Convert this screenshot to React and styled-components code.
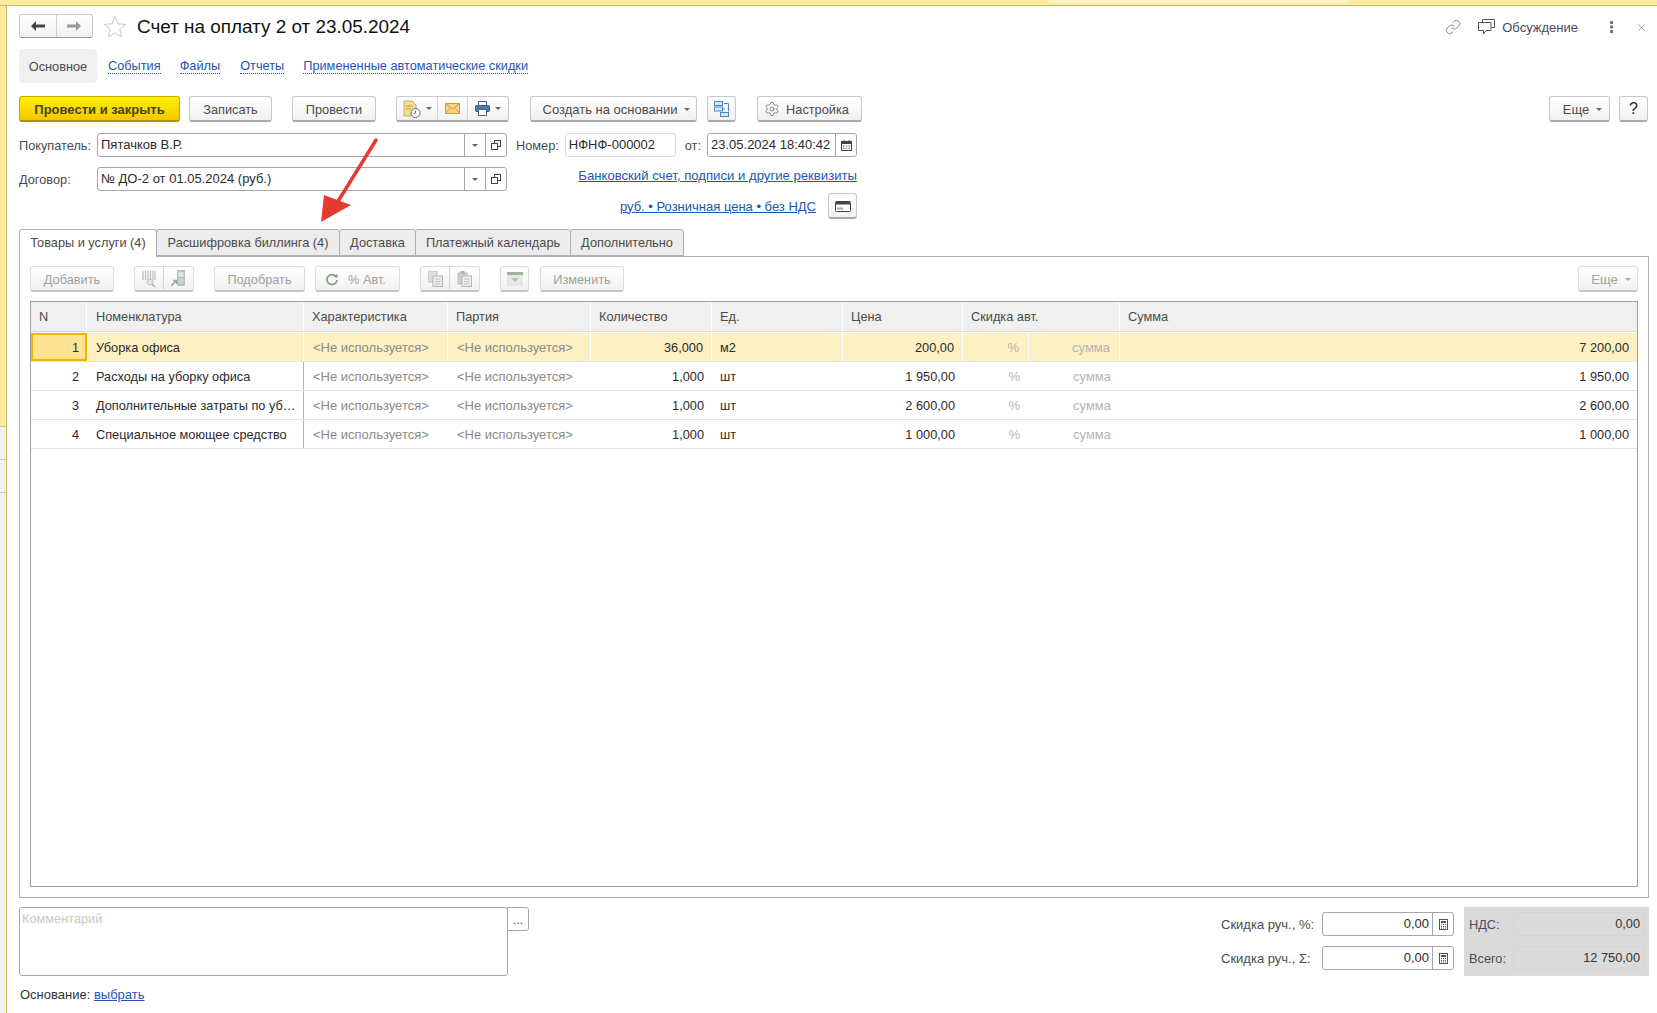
import React from "react";
import styled, { createGlobalStyle } from "styled-components";
import { Settings, Link as ChainLink, X } from "lucide-react";

const columns = "56px 217px 144px 143px 121px 131px 120px 66px 91px 1fr";

const rows = [
  { n: 1, name: "Уборка офиса", qty: "36,000", unit: "м2", price: "200,00", sum: "7 200,00" },
  { n: 2, name: "Расходы на уборку офиса", qty: "1,000", unit: "шт", price: "1 950,00", sum: "1 950,00" },
  { n: 3, name: "Дополнительные затраты по уб…", qty: "1,000", unit: "шт", price: "2 600,00", sum: "2 600,00" },
  { n: 4, name: "Специальное моющее средство", qty: "1,000", unit: "шт", price: "1 000,00", sum: "1 000,00" },
];

function Caret({ color = "#666" }) {
  return (
    <svg width="6" height="3" viewBox="0 0 6 3">
      <path d="M0 0h6L3 3z" fill={color} />
    </svg>
  );
}

function Star() {
  return (
    <svg width="24" height="23" viewBox="0 0 24 23" fill="none">
      <path d="M12 1.5l3 7.3 7.8.6-6 5 1.9 7.6L12 17.9 5.300 22l1.900-7.600-6-5 7.800-.6z" stroke="#c9c9c9" />
    </svg>
  );
}

function NavArrow({ left, color }) {
  return (
    <svg width="14" height="10" viewBox="0 0 14 10" style={{ transform: left ? "none" : "scaleX(-1)" }}>
      <path d="M0 5l5-5v3.500h9v3H5V10z" fill={color} />
    </svg>
  );
}

function Bubbles() {
  return (
    <svg width="17" height="16" viewBox="0 0 17 16" fill="none" stroke="#555">
      <path d="M4.500 3V.5h12v8h-3" />
      <path d="M.5 3.500h12.500v8H8L5.500 15v-3.500h-5z" fill="#fff" />
    </svg>
  );
}

function Dots() {
  return (
    <svg width="4" height="12" viewBox="0 0 4 12" fill="#777">
      <rect x="1" y="0" width="3" height="3" />
      <rect x="1" y="4.500" width="3" height="3" />
      <rect x="1" y="9" width="3" height="3" />
    </svg>
  );
}

function DocClock() {
  return (
    <svg width="18" height="18" viewBox="0 0 18 18">
      <path d="M1 1h8l4 4v11H1z" fill="#f6dc96" stroke="#d0a850" />
      <path d="M3 6h7M3 9h5" stroke="#c89a3c" />
      <circle cx="12.500" cy="13" r="4.500" fill="#fff" stroke="#3f6fb5" />
      <path d="M12.500 10.500V13l-2 1" stroke="#d8352a" fill="none" />
    </svg>
  );
}

function Envelope() {
  return (
    <svg width="15" height="11" viewBox="0 0 15 11">
      <rect x=".5" y=".5" width="14" height="10" fill="#f6d48a" stroke="#d8973a" />
      <path d="M.5.5l7 5.500 7-5.500M.5 10.500l5-6M14.500 10.500l-5-6" fill="none" stroke="#d8973a" />
    </svg>
  );
}

function Printer() {
  return (
    <svg width="15" height="15" viewBox="0 0 15 15">
      <rect x="3.500" y=".5" width="8" height="4" fill="#fff" stroke="#44648c" />
      <rect x=".5" y="4.500" width="14" height="6" rx="1" fill="#4f77a8" stroke="#3c5c84" />
      <rect x="3.500" y="8.500" width="8" height="6" fill="#fff" stroke="#44648c" />
    </svg>
  );
}

function Structure() {
  return (
    <svg width="15" height="16" viewBox="0 0 15 16" fill="#d7e6f5" stroke="#4f86bd">
      <rect x=".5" y=".5" width="8" height="4" />
      <rect x=".5" y="6" width="8" height="4" />
      <rect x="6.500" y="11.500" width="8" height="4" />
      <path d="M10 2.500h4.500v8M8.500 8H11" fill="none" />
    </svg>
  );
}

function Calendar() {
  return (
    <svg width="11" height="11" viewBox="0 0 11 11">
      <rect x=".5" y="1.500" width="10" height="9" fill="#fff" stroke="#444" />
      <rect x="1" y="2" width="9" height="2" fill="#444" />
      <path d="M3 0v2M8 0v2" stroke="#444" />
      <path d="M2 6h1.500M4.800 6h1.500M7.500 6H9M2 8.300h1.500M4.800 8.300h1.500M7.500 8.300H9" stroke="#666" />
    </svg>
  );
}

function Calculator() {
  return (
    <svg width="9" height="11" viewBox="0 0 9 11">
      <rect x=".5" y=".5" width="8" height="10" fill="#fff" stroke="#555" />
      <rect x="2" y="2" width="5" height="2" fill="#555" />
      <path d="M2 5.500h1M4 5.500h1M6 5.500h1M2 7.500h1M4 7.500h1M6 7.500h1M2 9h1M4 9h1M6 9h1" stroke="#555" />
    </svg>
  );
}

function PriceCard() {
  return (
    <svg width="16" height="11" viewBox="0 0 16 11">
      <rect x=".5" y=".5" width="15" height="10" rx="1" fill="#fff" stroke="#444" />
      <rect x="1" y="1" width="14" height="2.500" fill="#444" />
      <path d="M3 8.500V6.500M5 8.500V6.500M7 8.500V6.500" stroke="#555" />
    </svg>
  );
}

function ScanHand() {
  return (
    <svg width="14" height="16" viewBox="0 0 14 16" opacity=".55">
      <path d="M1 0v9M3.500 0v9M6 0v9M8.500 0v9M11 0v9M13 0v9" stroke="#777" />
      <circle cx="8" cy="11" r="3" fill="#d5d5e5" stroke="#999" />
      <path d="M10 13l3 3" stroke="#777" strokeWidth="1.500" />
    </svg>
  );
}

function Terminal() {
  return (
    <svg width="15" height="17" viewBox="0 0 15 17" opacity=".6">
      <rect x="6" y="0" width="8" height="16" rx="1" fill="#8a9a9a" />
      <rect x="7.500" y="2" width="5" height="5" fill="#c8e0d0" />
      <path d="M7.500 9h5M7.500 11h5M7.500 13h5" stroke="#ddd" />
      <path d="M0 16l5-5M2 10.500h3.500V14" stroke="#4d7d58" strokeWidth="1.500" fill="none" />
    </svg>
  );
}

function Refresh() {
  return (
    <svg width="12" height="13" viewBox="0 0 12 13" fill="none">
      <path d="M10 3.500A5 5 0 1 0 11 7" stroke="#8aa08a" strokeWidth="1.800" />
      <path d="M7.500 3.800L11.500 5V.8z" fill="#8aa08a" />
    </svg>
  );
}

function Sheets({ clip }) {
  return (
    <svg width="15" height="16" viewBox="0 0 15 16" opacity=".6">
      <rect x={clip ? 1 : 0} y={clip ? 2 : 0} width="9" height="11" fill={clip ? "#b8ad98" : "#ccc"} stroke="#999" />
      {clip && <rect x="3.500" y="0" width="4" height="3" fill="#888" />}
      <rect x="5" y="5" width="9.500" height="10.500" fill="#e8ecec" stroke="#888" />
      <path d="M7 8h5.500M7 10.500h5.500M7 13h5.500" stroke="#999" />
    </svg>
  );
}

function FilterSheet() {
  return (
    <svg width="16" height="14" viewBox="0 0 16 14" opacity=".6">
      <rect x="0" y="0" width="16" height="14" fill="#d8e0d8" />
      <rect x="0" y="0" width="16" height="3" fill="#5d8a5d" />
      <path d="M4 6h8L8 10z" fill="#7ea77e" />
    </svg>
  );
}

function Arrow() {
  return (
    <ArrowMark width="60" height="90" viewBox="0 0 60 90">
      <path d="M55 3L16 66" stroke="#e53a2f" strokeWidth="3.500" strokeLinecap="round" />
      <path d="M0 85l3-27 27 10z" fill="#e53a2f" />
    </ArrowMark>
  );
}

function OpenIcon() {
  return (
    <svg width="10" height="10" viewBox="0 0 10 10" fill="#fff" stroke="#444">
      <rect x="3.500" y=".5" width="6" height="6" />
      <rect x=".5" y="3.500" width="6" height="6" />
    </svg>
  );
}

function LookupField({ value }) {
  return (
    <Field $width={410}>
      <FieldValue>{value}</FieldValue>
      <FieldAddon $width={21}>
        <Caret />
      </FieldAddon>
      <FieldAddon $width={21}>
        <OpenIcon />
      </FieldAddon>
    </Field>
  );
}

function App() {
  return (
    <>
      <GlobalStyle />
      <Page>
        <TopStrip>
          <TopTab />
        </TopStrip>
        <Body>
          <SideStrip>
            <SideActive />
            <SideItem />
            <SideItem />
            <SideRest />
          </SideStrip>
          <Content>
            <TitleRow>
              <NavGroup>
                <NavButton $first>
                  <NavArrow left color="#444" />
                </NavButton>
                <NavButton>
                  <NavArrow color="#999" />
                </NavButton>
              </NavGroup>
              <StarWrap>
                <Star />
              </StarWrap>
              <Title>Счет на оплату 2 от 23.05.2024</Title>
              <TitleTools>
                <LinkIcon size={16} strokeWidth={1} color="#555" />
                <Bubbles />
                <ToolText>Обсуждение</ToolText>
                <DotsWrap>
                  <Dots />
                </DotsWrap>
                <X size={11} strokeWidth={1.4} color="#666" />
              </TitleTools>
            </TitleRow>

            <SectionRow>
              <SectionActive>Основное</SectionActive>
              <SectionLink $ml={11}>События</SectionLink>
              <SectionLink $ml={19}>Файлы</SectionLink>
              <SectionLink $ml={20}>Отчеты</SectionLink>
              <SectionLink $ml={19}>Примененные автоматические скидки</SectionLink>
            </SectionRow>

            <CommandBar>
              <PrimaryButton>Провести и закрыть</PrimaryButton>
              <Button $width={83} $ml={9}>Записать</Button>
              <Button $width={84} $ml={20}>Провести</Button>
              <ButtonGroup $ml={20}>
                <GroupPart $width={41}>
                  <DocClock />
                  <Caret />
                </GroupPart>
                <GroupPart $width={30}>
                  <Envelope />
                </GroupPart>
                <GroupPart $width={40}>
                  <Printer />
                  <Caret />
                </GroupPart>
              </ButtonGroup>
              <MenuButton $width={167} $ml={21}>
                Создать на основании
                <Caret />
              </MenuButton>
              <Button $width={29} $ml={10}>
                <Structure />
              </Button>
              <GearButton $width={105} $ml={21}>
                <Settings size={16} strokeWidth={1} color="#555" />
                Настройка
              </GearButton>
              <MenuButton $width={61} $ml="auto">
                Еще
                <Caret />
              </MenuButton>
              <Button $width={29} $ml={9}>
                <HelpMark>?</HelpMark>
              </Button>
            </CommandBar>

            <FormBlock>
              <FormLeft>
                <FormRow>
                  <FieldLabel>Покупатель:</FieldLabel>
                  <LookupField value="Пятачков В.Р." />
                </FormRow>
                <FormRow>
                  <FieldLabel>Договор:</FieldLabel>
                  <LookupField value="№ ДО-2 от 01.05.2024 (руб.)" />
                </FormRow>
              </FormLeft>
              <FormRight>
                <FormRow>
                  <InlineLabel>Номер:</InlineLabel>
                  <Field $width={111} $light>
                    <FieldValue>НФНФ-000002</FieldValue>
                  </Field>
                  <InlineLabel $ml={9}>от:</InlineLabel>
                  <Field $width={150}>
                    <FieldValue>23.05.2024 18:40:42</FieldValue>
                    <FieldAddon $width={21}>
                      <Calendar />
                    </FieldAddon>
                  </Field>
                </FormRow>
                <RequisitesLink>Банковский счет, подписи и другие реквизиты</RequisitesLink>
                <PriceRow>
                  <PlainLink>руб. • Розничная цена • без НДС</PlainLink>
                  <Button $width={29} $ml={12}>
                    <PriceCard />
                  </Button>
                </PriceRow>
              </FormRight>
            </FormBlock>

            <TabBar>
              <Tab $width={138} $active>Товары и услуги (4)</Tab>
              <Tab $width={184}>Расшифровка биллинга (4)</Tab>
              <Tab $width={77}>Доставка</Tab>
              <Tab $width={156}>Платежный календарь</Tab>
              <Tab $width={114}>Дополнительно</Tab>
            </TabBar>

            <TabPanel>
              <TableBar>
                <Button $width={84} $muted>Добавить</Button>
                <ButtonGroup $ml={20} $muted>
                  <GroupPart $width={29}>
                    <ScanHand />
                  </GroupPart>
                  <GroupPart $width={29}>
                    <Terminal />
                  </GroupPart>
                </ButtonGroup>
                <Button $width={91} $ml={20} $muted>Подобрать</Button>
                <AutoButton $width={85} $ml={10} $muted>
                  <Refresh />
                  % Авт.
                </AutoButton>
                <ButtonGroup $ml={20} $muted>
                  <GroupPart $width={29}>
                    <Sheets />
                  </GroupPart>
                  <GroupPart $width={29}>
                    <Sheets clip />
                  </GroupPart>
                </ButtonGroup>
                <Button $width={29} $ml={20} $muted>
                  <FilterSheet />
                </Button>
                <Button $width={84} $ml={11} $muted>Изменить</Button>
                <MenuButton $width={60} $ml="auto" $muted>
                  Еще
                  <Caret color="#aaa" />
                </MenuButton>
              </TableBar>

              <Table>
                <HeadRow>
                  <HeadCell>N</HeadCell>
                  <HeadCell>Номенклатура</HeadCell>
                  <HeadCell>Характеристика</HeadCell>
                  <HeadCell>Партия</HeadCell>
                  <HeadCell>Количество</HeadCell>
                  <HeadCell>Ед.</HeadCell>
                  <HeadCell>Цена</HeadCell>
                  <HeadCell $span={2}>Скидка авт.</HeadCell>
                  <HeadCell>Сумма</HeadCell>
                </HeadRow>
                {rows.map((row, i) => (
                  <Row key={row.n} $active={i === 0}>
                    <NumberCell $active={i === 0}>{row.n}</NumberCell>
                    <NameCell $active={i === 0}>{row.name}</NameCell>
                    <Cell $active={i === 0} $muted>&lt;Не используется&gt;</Cell>
                    <Cell $active={i === 0} $muted>&lt;Не используется&gt;</Cell>
                    <Cell $active={i === 0} $right>{row.qty}</Cell>
                    <UnitCell $active={i === 0}>{row.unit}</UnitCell>
                    <Cell $active={i === 0} $right>{row.price}</Cell>
                    <Cell $active={i === 0} $right $faint>%</Cell>
                    <Cell $active={i === 0} $right $faint>сумма</Cell>
                    <Cell $active={i === 0} $right $last>{row.sum}</Cell>
                  </Row>
                ))}
              </Table>
            </TabPanel>

            <Footer>
              <CommentColumn>
                <CommentRow>
                  <CommentBox>Комментарий</CommentBox>
                  <MoreButton>...</MoreButton>
                </CommentRow>
                <BaseRow>
                  Основание: <PlainLink>выбрать</PlainLink>
                </BaseRow>
              </CommentColumn>
              <DiscountColumn>
                <DiscountRow>
                  <DiscountLabel>Скидка руч., %:</DiscountLabel>
                  <Field $width={132}>
                    <NumberValue>0,00</NumberValue>
                    <FieldAddon $width={21}>
                      <Calculator />
                    </FieldAddon>
                  </Field>
                </DiscountRow>
                <DiscountRow>
                  <DiscountLabel>Скидка руч., Σ:</DiscountLabel>
                  <Field $width={132}>
                    <NumberValue>0,00</NumberValue>
                    <FieldAddon $width={21}>
                      <Calculator />
                    </FieldAddon>
                  </Field>
                </DiscountRow>
              </DiscountColumn>
              <TotalsPanel>
                <TotalRow>
                  <TotalLabel>НДС:</TotalLabel>
                  <TotalValue>0,00</TotalValue>
                </TotalRow>
                <TotalRow>
                  <TotalLabel>Всего:</TotalLabel>
                  <TotalValue>12 750,00</TotalValue>
                </TotalRow>
              </TotalsPanel>
            </Footer>
            <Arrow />
          </Content>
        </Body>
      </Page>
    </>
  );
}

const GlobalStyle = createGlobalStyle`
  html, body {
    margin: 0;
    padding: 0;
    background: #fff;
  }
  body {
    font-family: "Liberation Sans", Arial, sans-serif;
    font-size: 12.75px;
    color: #4b4b4b;
  }
  * {
    box-sizing: border-box;
  }
`;

const Page = styled.div`
  display: flex;
  flex-direction: column;
  width: 1657px;
  height: 1013px;
  overflow: hidden;
`;

const TopStrip = styled.div`
  display: flex;
  flex: none;
  height: 6px;
  padding-left: 1049px;
  background: #fdeb9b;
  border-bottom: 1px solid #c9b966;
`;

const TopTab = styled.div`
  width: 300px;
  height: 3px;
  background: #fcf3c9;
`;

const Body = styled.div`
  display: flex;
  flex: 1;
  min-height: 0;
`;

const SideStrip = styled.div`
  display: flex;
  flex: none;
  flex-direction: column;
  width: 7px;
  border-right: 1px solid #c9b966;
`;

const SideActive = styled.div`
  height: 421px;
  background: #fdeb9b;
  border-bottom: 1px solid #c9c9c9;
`;

const SideItem = styled.div`
  height: 33px;
  background: #f0f0f0;
  border-bottom: 1px solid #c9c9c9;
`;

const SideRest = styled.div`
  flex: 1;
  background: #f0f0f0;
`;

const Content = styled.main`
  position: relative;
  display: flex;
  flex: 1;
  flex-direction: column;
  min-width: 0;
  padding: 8px 8px 0 12px;
`;

const TitleRow = styled.div`
  display: flex;
  align-items: center;
  height: 24px;
`;

const NavGroup = styled.div`
  display: flex;
  width: 74px;
  height: 24px;
  border: 1px solid #c8c8c8;
  border-bottom-color: #9a9a9a;
  border-radius: 3px;
  background: linear-gradient(#fff, #f1f1f1);
`;

const NavButton = styled.div`
  display: flex;
  align-items: center;
  justify-content: center;
  flex: 1;
  border-right: ${(p) => (p.$first ? "1px solid #d0d0d0" : "none")};
`;

const StarWrap = styled.div`
  display: flex;
  margin-left: 10px;
`;

const Title = styled.h1`
  margin: 1px 0 0 10px;
  font-size: 18.9px;
  font-weight: 400;
  color: #111;
`;

const TitleTools = styled.div`
  display: flex;
  align-items: center;
  margin-left: auto;
  padding: 2px 2px 0 0;
`;

const LinkIcon = styled(ChainLink)`
  margin-right: 17px;
`;

const ToolText = styled.span`
  margin-left: 7px;
  font-size: 13px;
  color: #4b4b5b;
`;

const DotsWrap = styled.span`
  display: flex;
  margin: 0 23px 0 31px;
`;

const SectionRow = styled.nav`
  display: flex;
  align-items: center;
  height: 34px;
  margin-top: 11px;
`;

const SectionActive = styled.div`
  display: flex;
  align-items: center;
  justify-content: center;
  width: 78px;
  height: 34px;
  background: #f0f0f0;
  border-radius: 3px;
`;

const SectionLink = styled.a`
  margin-left: ${(p) => p.$ml}px;
  color: #1d55b4;
  border-bottom: 1px dotted #1d55b4;
  line-height: 14px;
`;

const CommandBar = styled.div`
  display: flex;
  align-items: center;
  height: 26px;
  margin-top: 13px;
  padding-right: 1px;
`;

const Button = styled.div`
  display: flex;
  flex: none;
  align-items: center;
  justify-content: center;
  gap: 7px;
  width: ${(p) => p.$width}px;
  height: 26px;
  margin-left: ${(p) => (p.$ml === "auto" ? "auto" : `${p.$ml || 0}px`)};
  padding-top: 1px;
  border: 1px solid ${(p) => (p.$muted ? "#dcdcdc" : "#c8c8c8")};
  border-bottom: 2px solid ${(p) => (p.$muted ? "#c4c4c4" : "#a8a8a8")};
  border-radius: 3px;
  background: linear-gradient(#fff, #f1f1f1);
  color: ${(p) => (p.$muted ? "#a0a0a0" : "#4b4b4b")};
  white-space: nowrap;
`;

const MenuButton = styled(Button)`
  padding-left: 6px;
  font-size: 13px;
`;

const GearButton = styled(Button)`
  gap: 6px;
  padding-right: 6px;
`;

const AutoButton = styled(Button)`
  gap: 10px;
  padding-right: 3px;
`;

const PrimaryButton = styled.div`
  display: flex;
  flex: none;
  align-items: center;
  justify-content: center;
  width: 161px;
  height: 26px;
  padding-top: 1px;
  border: 1px solid #c8a800;
  border-bottom: 2px solid #b09400;
  border-radius: 3px;
  background: linear-gradient(#fff000, #f2c800);
  color: #4b4020;
  font-size: 13px;
  font-weight: 700;
`;

const ButtonGroup = styled.div`
  display: flex;
  flex: none;
  height: 26px;
  margin-left: ${(p) => p.$ml || 0}px;
  border: 1px solid ${(p) => (p.$muted ? "#dcdcdc" : "#c8c8c8")};
  border-bottom: 2px solid ${(p) => (p.$muted ? "#c4c4c4" : "#a8a8a8")};
  border-radius: 3px;
  background: linear-gradient(#fff, #f1f1f1);
`;

const GroupPart = styled.div`
  display: flex;
  align-items: center;
  justify-content: center;
  gap: 5px;
  width: ${(p) => p.$width}px;
  border-right: 1px solid #d4d4d4;
  &:last-child {
    border-right: none;
  }
`;

const HelpMark = styled.span`
  font-size: 16px;
  color: #222;
`;

const FormBlock = styled.div`
  display: flex;
  height: 96px;
  margin-top: 11px;
`;

const FormLeft = styled.div`
  display: flex;
  flex-direction: column;
  gap: 10px;
`;

const FormRight = styled.div`
  display: flex;
  flex-direction: column;
  align-items: flex-end;
  width: 350px;
`;

const FormRow = styled.div`
  display: flex;
  align-items: center;
  height: 24px;
`;

const FieldLabel = styled.label`
  width: 78px;
  color: #4b4b4b;
`;

const InlineLabel = styled.label`
  margin-left: ${(p) => p.$ml || 0}px;
  margin-right: 6px;
  color: #4b4b4b;
`;

const Field = styled.div`
  display: flex;
  flex: none;
  width: ${(p) => p.$width}px;
  height: 24px;
  border: 1px solid ${(p) => (p.$light ? "#dcdcdc" : "#a6a6a6")};
  border-radius: 3px;
  background: #fff;
`;

const FieldValue = styled.div`
  flex: 1;
  padding-left: 3px;
  line-height: 22px;
  font-size: 13px;
  color: #2b2b2b;
  white-space: nowrap;
`;

const NumberValue = styled(FieldValue)`
  padding: 0 3px 0 0;
  text-align: right;
`;

const FieldAddon = styled.div`
  display: flex;
  flex: none;
  align-items: center;
  justify-content: center;
  width: ${(p) => p.$width}px;
  border-left: 1px solid #a6a6a6;
`;

const PlainLink = styled.a`
  color: #1d55b4;
  font-size: 13px;
  text-decoration: underline;
`;

const RequisitesLink = styled(PlainLink)`
  margin-top: 11px;
  font-size: 13.15px;
  line-height: 16px;
`;

const PriceRow = styled.div`
  display: flex;
  align-items: center;
  margin-top: 9px;
`;

const TabBar = styled.div`
  display: flex;
  height: 28px;
`;

const Tab = styled.div`
  position: relative;
  z-index: ${(p) => (p.$active ? 2 : 1)};
  display: flex;
  flex: none;
  align-items: center;
  justify-content: center;
  width: ${(p) => p.$width}px;
  height: ${(p) => (p.$active ? "28px" : "27px")};
  margin-left: ${(p) => (p.$active ? "0" : "-1px")};
  padding-bottom: ${(p) => (p.$active ? "2px" : "1px")};
  border: 1px solid #b0b0b0;
  border-bottom: ${(p) => (p.$active ? "none" : "1px solid #b0b0b0")};
  border-radius: 3px 3px 0 0;
  background: ${(p) => (p.$active ? "#fff" : "#ececec")};
`;

const TabPanel = styled.section`
  display: flex;
  flex-direction: column;
  height: 642px;
  margin-top: -1px;
  padding: 9px 10px 10px 10px;
  border: 1px solid #b0b0b0;
`;

const TableBar = styled.div`
  display: flex;
  align-items: center;
  height: 26px;
`;

const Table = styled.div`
  display: flex;
  flex: 1;
  flex-direction: column;
  margin-top: 9px;
  border: 1px solid #a0a0a0;
`;

const HeadRow = styled.div`
  display: grid;
  grid-template-columns: ${columns};
  height: 30px;
  margin-bottom: 1px;
  background: #f0f0f0;
`;

const HeadCell = styled.div`
  grid-column: span ${(p) => p.$span || 1};
  padding-left: 8px;
  line-height: 29px;
  border-right: 1px solid #fff;
  border-bottom: 1px solid #d8d8d8;
  &:nth-child(2) {
    padding-left: 9px;
  }
  &:last-child {
    border-right: none;
  }
`;

const Row = styled.div`
  display: grid;
  grid-template-columns: ${columns};
  height: 29px;
  border-bottom: 1px solid #e2e2e2;
  background: ${(p) => (p.$active ? "#fdf1c4" : "#fff")};
`;

const Cell = styled.div`
  padding: 0 ${(p) => (p.$faint ? "9px" : "8px")} 0 ${(p) => (p.$right ? "0" : "9px")};
  line-height: 29px;
  font-size: ${(p) => (p.$muted || p.$faint ? "13px" : "12.75px")};
  text-align: ${(p) => (p.$right ? "right" : "left")};
  color: ${(p) => (p.$muted ? "#8a8a8a" : p.$faint ? "#b4b4b4" : "#2b2b2b")};
  white-space: nowrap;
  overflow: hidden;
  border-right: ${(p) => (p.$active && !p.$last ? "1px solid #fff" : "none")};
`;

const UnitCell = styled(Cell)`
  padding-left: 8px;
`;

const NumberCell = styled(Cell)`
  padding-right: ${(p) => (p.$active ? "6px" : "8px")};
  text-align: right;
  border: ${(p) => (p.$active ? "2px solid #f0b400" : "none")};
  background: ${(p) => (p.$active ? "#fde393" : "transparent")};
  line-height: ${(p) => (p.$active ? "25px" : "29px")};
`;

const NameCell = styled(Cell)`
  border-right: 1px solid ${(p) => (p.$active ? "#fff" : "#b4b4b4")};
`;

const Footer = styled.footer`
  display: flex;
  margin-top: 9px;
`;

const CommentColumn = styled.div`
  display: flex;
  flex-direction: column;
`;

const CommentRow = styled.div`
  display: flex;
  align-items: flex-start;
`;

const CommentBox = styled.div`
  width: 489px;
  height: 69px;
  padding-left: 2px;
  border: 1px solid #a6a6a6;
  border-radius: 3px;
  color: #c8c8c8;
  line-height: 21px;
`;

const MoreButton = styled.div`
  width: 22px;
  height: 24px;
  margin-left: -1px;
  border: 1px solid #a6a6a6;
  border-radius: 0 3px 3px 0;
  text-align: center;
  line-height: 24px;
  font-size: 12px;
`;

const BaseRow = styled.div`
  margin-top: 11px;
  padding-left: 1px;
  font-size: 13px;
  color: #333;
`;

const DiscountColumn = styled.div`
  display: flex;
  flex-direction: column;
  gap: 10px;
  margin-left: auto;
  padding-top: 5px;
`;

const DiscountRow = styled.div`
  display: flex;
  align-items: center;
  height: 24px;
`;

const DiscountLabel = styled.label`
  width: 101px;
  font-size: 13px;
`;

const TotalsPanel = styled.div`
  display: flex;
  flex-direction: column;
  gap: 10px;
  width: 185px;
  height: 69px;
  margin-left: 10px;
  padding: 5px 4px 0 5px;
  background: #dadada;
`;

const TotalRow = styled.div`
  display: flex;
  align-items: center;
  height: 24px;
`;

const TotalLabel = styled.span`
  width: 44px;
  color: #4b4b5b;
`;

const TotalValue = styled.div`
  flex: 1;
  height: 24px;
  padding-right: 4px;
  border: 1px solid #d4d4d4;
  border-radius: 3px;
  line-height: 22px;
  text-align: right;
  color: #333;
`;

const ArrowMark = styled.svg`
  position: absolute;
  left: 314px;
  top: 131px;
`;

export default App;
